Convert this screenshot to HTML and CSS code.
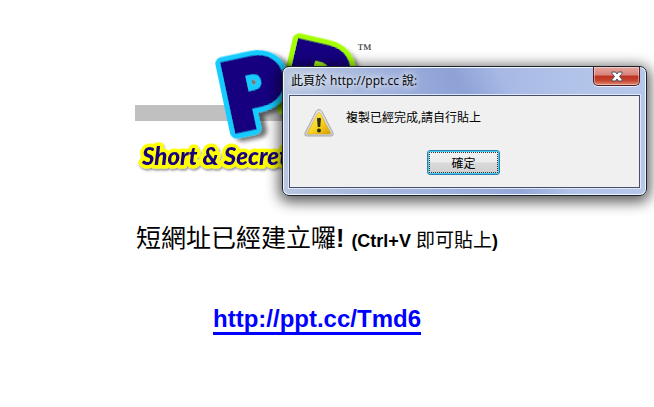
FILE: index.html
```html
<!DOCTYPE html>
<html lang="zh-Hant">
<head>
    <meta charset="UTF-8">
    <meta name="viewport" content="width=device-width, initial-scale=1.0">
    <title>ppt.cc</title>
    <link rel="stylesheet" href="styles.css">
</head>
<body>
    <main class="container">
        <svg class="logo" viewBox="0 0 364 150" role="img" aria-label="PP Short &amp; Secret">
            <defs>
                <filter id="shadow" x="-20%" y="-20%" width="150%" height="150%">
                    <feDropShadow dx="5" dy="4" stdDeviation="2" flood-color="#000" flood-opacity="0.55"/>
                </filter>
                <filter id="soft" x="-20%" y="-20%" width="150%" height="150%">
                    <feDropShadow dx="1" dy="2" stdDeviation="1" flood-color="#000" flood-opacity="0.4"/>
                </filter>
            </defs>
            <rect y="75" width="364" height="16" fill="#c0c0c0"/>
            <g class="letter" transform="translate(144 77) rotate(13)" filter="url(#shadow)">
                <text class="green">P</text>
                <text class="navy">P</text>
            </g>
            <g class="letter" transform="translate(97 103) rotate(-12)" filter="url(#shadow)">
                <text class="cyan">P</text>
                <text class="navy">P</text>
            </g>
            <text class="tm" x="222" y="24">™</text>
            <text class="tagline" x="7" y="135" filter="url(#soft)">Short &amp; Secret</text>
        </svg>
        <h1>短網址已經建立囉<b>!</b> <small><b>(Ctrl+V</b> <span>即可貼上</span><b>)</b></small></h1>
        <a class="short-url" href="http://ppt.cc/Tmd6">http://ppt.cc/Tmd6</a>
    </main>

    <div class="dialog" role="alertdialog" aria-labelledby="title" aria-describedby="message">
        <div class="title-bar">
            <span id="title">此頁於 http://ppt.cc 說:</span>
            <button class="close" aria-label="Close">
                <svg width="12" height="11" viewBox="0 0 12 11">
                    <path d="M1 1h3.500L6 3l1.500-2H11v1.500L8.500 5.500 11 8.500V10H7.500L6 8l-1.500 2H1V8.500l2.500-3L1 2.500z" fill="#fff" stroke="#4b4f60"/>
                </svg>
            </button>
        </div>
        <div class="dialog-body">
            <div class="message">
                <svg width="32" height="30" viewBox="0 0 32 30">
                    <defs>
                        <linearGradient id="yellow" x1="0" y1="0" x2="1" y2="1">
                            <stop offset="0" stop-color="#fff27a"/>
                            <stop offset="0.55" stop-color="#f8d21c"/>
                            <stop offset="1" stop-color="#d99e00"/>
                        </linearGradient>
                        <linearGradient id="silver" x1="0" y1="0" x2="0" y2="1">
                            <stop offset="0" stop-color="#e4e4e4"/>
                            <stop offset="1" stop-color="#cdcdcd"/>
                        </linearGradient>
                    </defs>
                    <path d="M16 1.500q2 0 3.200 2.500l10.600 20.500q1.400 3.500-2 3.500H4.200q-3.400 0-2-3.500L12.800 4Q14 1.500 16 1.500z" fill="url(#silver)" stroke="#a9a9a9"/>
                    <path d="M16 4.500q1 0 1.700 1.500l9.800 19q.5 1-.8 1H5.300q-1.300 0-.8-1l9.800-19Q15 4.500 16 4.500z" fill="url(#yellow)" stroke="#c9a227" stroke-width=".5"/>
                    <path d="M14 10.500q2-1.500 4 0l-.8 8.500h-2.400z" fill="#2c2a18"/>
                    <circle cx="16" cy="22.500" r="2" fill="#2c2a18"/>
                </svg>
                <p id="message">複製已經完成,請自行貼上</p>
            </div>
            <button class="ok">確定</button>
        </div>
    </div>
</body>
</html>
```

FILE: styles.css
```css
* {
    box-sizing: border-box;
}

body {
    margin: 0;
    background-color: #fff;
    font-family: "Liberation Sans", Arial, "Noto Sans CJK TC", sans-serif;
}

.container {
    max-width: 384px;
    margin: 0 auto;
    padding: 30px 20px 0 0;
    text-align: center;
}

.logo {
    display: block;
    width: 100%;
    overflow: visible;
}

.letter text {
    font-family: Inter, sans-serif;
    font-size: 96px;
    font-weight: 900;
}

.navy {
    fill: #190080;
    stroke: #190080;
    stroke-width: 3px;
}

.cyan {
    fill: #12ccff;
    stroke: #12ccff;
    stroke-width: 13px;
    stroke-linejoin: round;
}

.green {
    fill: #a4ff00;
    stroke: #a4ff00;
    stroke-width: 13px;
    stroke-linejoin: round;
}

.tm {
    font-family: "Liberation Serif", serif;
    font-size: 15px;
    fill: #333;
}

.tagline {
    font-family: Lato, sans-serif;
    font-size: 24px;
    font-style: italic;
    font-weight: 900;
    fill: #190080;
    stroke: #ffff00;
    stroke-width: 7px;
    stroke-linejoin: round;
    paint-order: stroke;
}

h1 {
    margin: 40px 0 0;
    font-size: 25px;
    font-weight: normal;
    line-height: 36px;
    white-space: nowrap;
}

h1 small {
    font-size: 18px;
}

h1 span {
    font-size: 19px;
}

.short-url {
    display: inline-block;
    margin-top: 47px;
    border-bottom: 3px solid #0000ff;
    color: #0000ff;
    font-size: 24px;
    font-weight: bold;
    line-height: 26px;
    text-decoration: none;
}

/* alert window */
.dialog {
    position: absolute;
    top: 66px;
    right: 7px;
    width: 365px;
    padding: 0 6px 7px;
    border: 1px solid #1c222c;
    border-radius: 7px;
    background:
        linear-gradient(60deg, transparent 35%, rgba(125, 145, 205, 0.5) 55%, transparent 66%),
        linear-gradient(90deg, #b8c6df, #a5b6de 25%, #9fb2e0 45%, #b2c3e9 80%, #b7c7ea);
    box-shadow: inset 0 0 0 1px #f0f6ff, 0 3px 14px 3px rgba(0, 0, 0, 0.65);
    font-family: "Open Sans", "Noto Sans CJK TC", sans-serif;
    font-size: 12px;
    color: #000;
}

.title-bar {
    display: flex;
    justify-content: space-between;
    height: 28px;
    padding-left: 2px;
    line-height: 28px;
}

.title-bar span {
    text-shadow: 0 0 6px #fff, 0 0 10px #fff;
}

.close {
    display: flex;
    align-items: center;
    justify-content: center;
    width: 47px;
    height: 19px;
    padding: 0;
    border: 1px solid #4f1d24;
    border-top: 0;
    border-radius: 0 0 5px 5px;
    background: linear-gradient(#e5a7a0, #d98178 45%, #bd3220 50%, #c64430 75%, #e08a70);
    box-shadow: inset 0 0 0 1px rgba(255, 255, 255, 0.4), 0 1px 0 #e6eeff;
}

.dialog-body {
    display: flex;
    flex-direction: column;
    align-items: center;
    padding: 12px 15px 12px 13px;
    border: 1px solid #475069;
    background-color: #f0f0f0;
    box-shadow: 0 0 0 1px #dfe8fb;
}

.message {
    display: flex;
    align-self: stretch;
    gap: 11px;
    height: 42px;
}

.message p {
    margin: 0;
    line-height: 20px;
}

.ok {
    width: 73px;
    height: 25px;
    padding: 0;
    border: 1px solid #2d7fae;
    border-radius: 3px;
    outline: 1px dotted #333;
    outline-offset: -3px;
    background: linear-gradient(#f3f3f3, #ebebeb 48%, #dadada 52%, #cfcfcf);
    box-shadow: inset 0 0 0 1px #43cdf5;
    font: inherit;
}
```
